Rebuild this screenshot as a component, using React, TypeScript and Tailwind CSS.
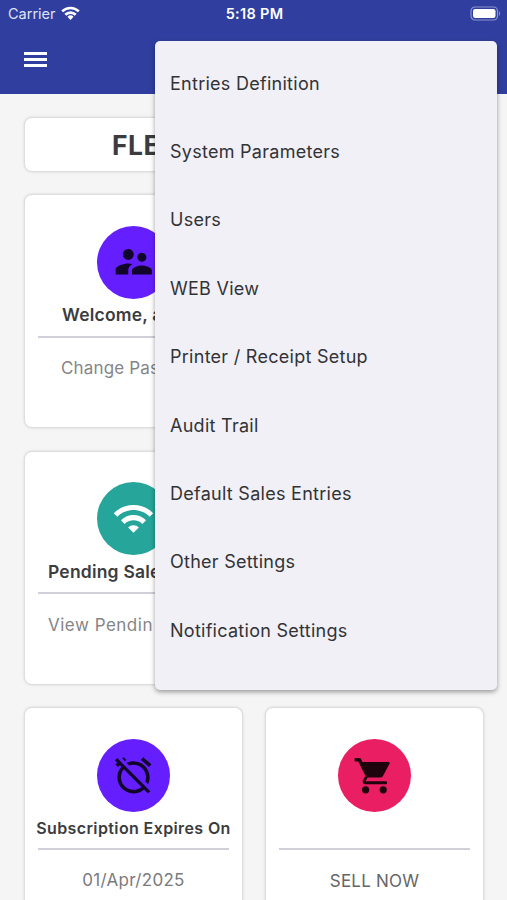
import type { ReactNode } from 'react'
import { MdAlarmOff, MdSupervisorAccount, MdWifi } from 'react-icons/md'

const menuItems = [
  'Entries Definition',
  'System Parameters',
  'Users',
  'WEB View',
  'Printer / Receipt Setup',
  'Audit Trail',
  'Default Sales Entries',
  'Other Settings',
  'Notification Settings',
]

function StatusBar() {
  return (
    <div className="grid h-[27px] grid-cols-3 items-center pl-[8px] pr-[6px] text-white">
      <div className="flex items-center gap-[5px]">
        <span className="text-[14.5px] text-[#dfe2f4]">Carrier</span>
        <svg width="19" height="14" viewBox="0 0 19 14" className="-mt-[2px]" fill="none" stroke="currentColor" strokeWidth="2.7">
          <path d="M1.2 5.4a11.8 11.8 0 0 1 16.6 0" />
          <path d="M4.3 8.8a7.4 7.4 0 0 1 10.4 0" />
          <path d="M9.5 13.9l-3-3.1a4.3 4.3 0 0 1 6 0z" fill="currentColor" stroke="none" />
        </svg>
      </div>
      <span className="text-center text-[14.5px] font-semibold tracking-[0.3px]">5:18 PM</span>
      <svg className="ml-auto -mt-px" width="31" height="15" viewBox="0 0 31 15">
        <rect x="1" y="1" width="26.5" height="13" rx="4" fill="none" stroke="#8c93cc" strokeWidth="1.2" />
        <rect x="3" y="3" width="22.5" height="9" rx="2.2" fill="#fff" />
        <path d="M29 5.2v4.6c1.4-.6 1.4-4 0-4.6z" fill="#8c93cc" />
      </svg>
    </div>
  )
}

function CartIcon() {
  return (
    <svg width="50" height="50" viewBox="0 0 50 50" className="text-[#20040d]" fill="currentColor">
      <path d="M5.3 8h4.3q1 0 1.4.9L12.4 12h26.2q1.6.2 1 1.6L33 26q-.9 1.6-2.6 1.6H17.6l-1.7 2.8q-.3.7.5.8H36q1 0 1 1v1.1q0 1-1 1H15.7q-3.6-.4-2.9-3.8l2.7-4.6L8.2 11.4H5.3q-.8 0-.8-.8V8.8q0-.8.8-.8z" />
      <circle cx="15.6" cy="39.8" r="3.6" />
      <circle cx="33.2" cy="39.8" r="3.6" />
    </svg>
  )
}

type CardProps = {
  icon?: ReactNode
  color?: string
  title?: string
  titleClass?: string
  label?: string
  labelClass?: string
}

function Card({ icon, color, title, titleClass = '', label, labelClass = '' }: CardProps) {
  return (
    <div className="flex h-[234px] flex-col items-center rounded-[8px] border border-[#dedee0] bg-white px-[13px] pt-[30.5px] shadow-[0_0_3px_rgba(0,0,0,0.12)]">
      {icon && (
        <>
          <div className={`flex size-[73px] shrink-0 items-center justify-center rounded-full ${color}`}>{icon}</div>
          <div className={`flex items-center font-semibold whitespace-nowrap text-[#3c3c3e] ${titleClass}`}>{title}</div>
          <div className="h-[2px] w-full shrink-0 bg-[#d0d0d8]" />
          <div className={`text-[17px] leading-6 whitespace-nowrap ${labelClass}`}>{label}</div>
        </>
      )}
    </div>
  )
}

function Menu() {
  return (
    <ul className="absolute top-[41px] left-[155px] h-[649px] w-[342px] rounded-[5px] bg-[#f1f0f6] pt-[8px] shadow-[0_2px_5px_rgba(0,0,0,0.38)]">
      {menuItems.map(item => (
        <li key={item} className="flex h-[68.4px] items-center pl-[15px] text-[18px] tracking-[0.27px] text-[#333336]">
          {item}
        </li>
      ))}
    </ul>
  )
}

export default function App() {
  return (
    <div className="relative h-[900px] w-[507px] overflow-hidden bg-[#f5f5f5] font-[Inter,sans-serif]">
      <header className="h-[94px] bg-[#303f9f]">
        <StatusBar />
        <div className="flex h-[65px] items-center pl-[24px]">
          <div className="flex w-[23px] flex-col gap-[3px]">
            <span className="h-[3px] bg-white" />
            <span className="h-[3px] bg-white" />
            <span className="h-[3px] bg-white" />
          </div>
        </div>
      </header>

      <main className="pr-[23px] pl-[24px] pt-[23px]">
        <div className="flex h-[55px] items-center rounded-[8px] border border-[#dedee0] bg-white pt-[3px] pl-[87px] text-[26.5px] font-bold tracking-[0.5px] text-[#3c3c3e] shadow-[0_0_3px_rgba(0,0,0,0.12)]">
          FLE
        </div>
        <div className="mt-[22px] grid grid-cols-2 gap-x-[22px] gap-y-[22.5px]">
          <Card
            icon={<MdSupervisorAccount size={43.5} className="text-[#12052b]" />}
            color="bg-[#651fff]"
            title="Welcome, a"
            titleClass="h-[37px] self-start pb-[3px] pl-[24px] text-[17.5px] tracking-[0.2px]"
            label="Change Pas"
            labelClass="mt-[18px] self-start pl-[23px] text-[#858587] tracking-[0.15px]"
          />
          <Card />
          <Card
            icon={<MdWifi size={43} className="text-white" />}
            color="bg-[#26a69a]"
            title="Pending Sale"
            titleClass="h-[37px] self-start pb-[2px] pl-[10px] text-[17.5px] tracking-[0.2px]"
            label="View Pendin"
            labelClass="mt-[19px] self-start pl-[10px] text-[#858587] tracking-[0.5px]"
          />
          <Card />
          <Card
            icon={<MdAlarmOff size={43} className="text-[#12052b]" />}
            color="bg-[#651fff]"
            title="Subscription Expires On"
            titleClass="h-[36px] pb-[4px] text-[16px] tracking-[0.38px]"
            label="01/Apr/2025"
            labelClass="mt-[18px] text-[#7b7b7d] tracking-[0.3px]"
          />
          <Card
            icon={<CartIcon />}
            color="bg-[#e91e63]"
            titleClass="h-[36px]"
            label="SELL NOW"
            labelClass="mt-[19px] text-[#666668] tracking-[0.2px]"
          />
        </div>
      </main>

      <Menu />
    </div>
  )
}
